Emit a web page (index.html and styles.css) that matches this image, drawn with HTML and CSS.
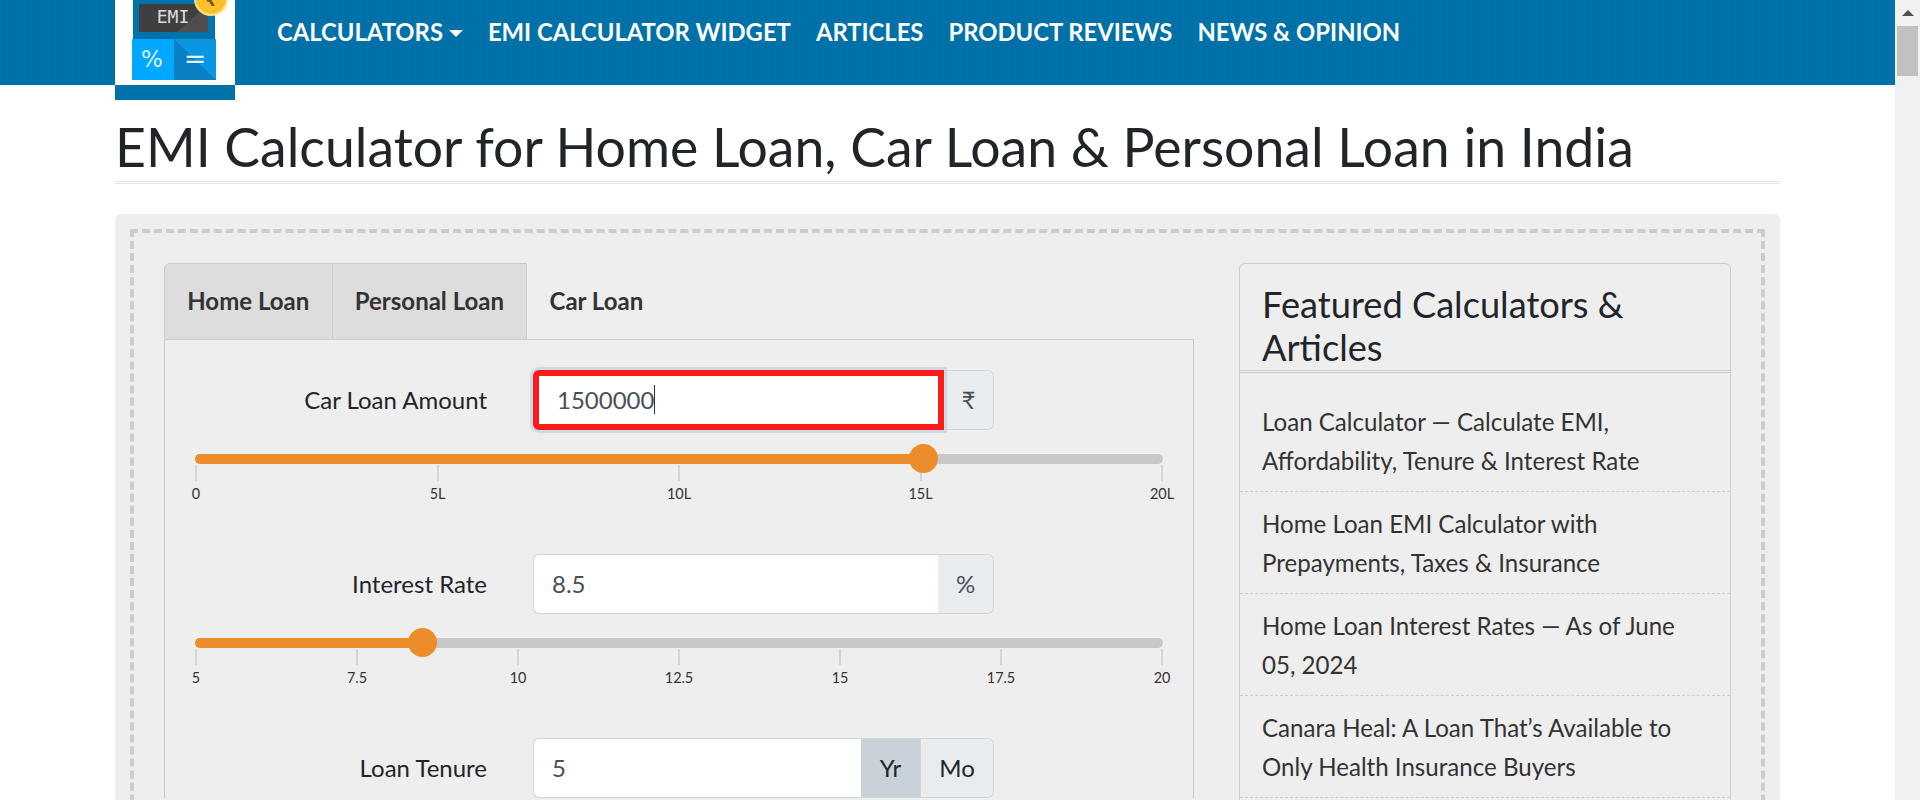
FILE: index.html
```html
<!DOCTYPE html>
<html lang="en">
<head>
<meta charset="UTF-8" />
<title>EMI Calculator for Home Loan, Car Loan &amp; Personal Loan in India</title>
<link rel="stylesheet" href="styles.css">
</head>
<body>

<div class="page">
  <header class="topbar">
    <a class="logo" href="#">
      <svg class="logo-art" width="120" height="85" viewBox="0 0 120 85">
        <rect x="18" y="0" width="82" height="40" fill="#0272ab" />
        <rect x="24" y="4" width="69" height="28" fill="#3f3f3f" />
        <polygon points="93,4 93,32 62,32" fill="#4e4e4e" />
        <text x="58" y="23" class="logo-emi" text-anchor="middle">EMI</text>
        <circle cx="96" cy="-1" r="16" fill="#fbc02d" stroke="#fde48a" stroke-width="2" />
        <text x="96" y="6" class="logo-coin" text-anchor="middle">₹</text>
        <rect x="17" y="39" width="42" height="41" fill="#00a8ff" />
        <rect x="59" y="39" width="42" height="41" fill="#0a96e0" />
        <polygon points="59,39 101,80 59,80" fill="#0a7fc2" />
        <text x="37" y="67" class="logo-sign" text-anchor="middle">%</text>
        <text x="80" y="68" class="logo-equals" text-anchor="middle">=</text>
      </svg>
    </a>
    <nav class="mainnav">
      <a href="#" class="has-caret">CALCULATORS</a>
      <a href="#">EMI CALCULATOR WIDGET</a>
      <a href="#">ARTICLES</a>
      <a href="#">PRODUCT REVIEWS</a>
      <a href="#">NEWS &amp; OPINION</a>
    </nav>
  </header>

  <main class="container">
    <h1 class="page-title">EMI Calculator for Home Loan, Car Loan &amp; Personal Loan in India</h1>

    <div class="panel">
      <div class="panel-inner">

        <section class="calc">
          <div class="tabs">
            <a href="#" class="tab">Home Loan</a>
            <a href="#" class="tab">Personal Loan</a>
            <a href="#" class="tab tab-active">Car Loan</a>
          </div>
          <div class="tab-body">

            <div class="field">
              <label class="field-label">Car Loan Amount</label>
              <div class="input-group">
                <div class="input input-focus">1500000<span class="caret"></span></div>
                <span class="addon addon-fill">₹</span>
              </div>
            </div>
            <div class="slider">
              <div class="track">
                <div class="track-fill" style="width: 75.2%"></div>
                <div class="thumb" style="left: 75.2%"></div>
              </div>
              <div class="ticks">
                <span class="tick">0</span>
                <span class="tick">5L</span>
                <span class="tick">10L</span>
                <span class="tick">15L</span>
                <span class="tick">20L</span>
              </div>
            </div>

            <div class="field">
              <label class="field-label">Interest Rate</label>
              <div class="input-group">
                <div class="input">8.5</div>
                <span class="addon addon-fill">%</span>
              </div>
            </div>
            <div class="slider">
              <div class="track">
                <div class="track-fill" style="width: 23.4%"></div>
                <div class="thumb" style="left: 23.4%"></div>
              </div>
              <div class="ticks">
                <span class="tick">5</span>
                <span class="tick">7.5</span>
                <span class="tick">10</span>
                <span class="tick">12.5</span>
                <span class="tick">15</span>
                <span class="tick">17.5</span>
                <span class="tick">20</span>
              </div>
            </div>

            <div class="field">
              <label class="field-label">Loan Tenure</label>
              <div class="input-group">
                <div class="input">5</div>
                <span class="addon addon-yr">Yr</span>
                <span class="addon addon-mo">Mo</span>
              </div>
            </div>

          </div>
        </section>

        <aside class="featured">
          <h2 class="featured-title">Featured Calculators &amp; Articles</h2>
          <ul class="featured-list">
            <li><a href="#">Loan Calculator — Calculate EMI, Affordability, Tenure &amp; Interest Rate</a></li>
            <li><a href="#">Home Loan EMI Calculator with Prepayments, Taxes &amp; Insurance</a></li>
            <li><a href="#">Home Loan Interest Rates — As of June 05, 2024</a></li>
            <li><a href="#">Canara Heal: A Loan That’s Available to Only Health Insurance Buyers</a></li>
          </ul>
        </aside>

      </div>
    </div>
  </main>
</div>

<div class="scrollbar">
  <span class="scroll-arrow"></span>
  <span class="scroll-thumb"></span>
</div>

</body>
</html>
```

FILE: styles.css
```css
* {
  box-sizing: border-box;
}
html, body {
  height: 800px;
  overflow: hidden;
}
body {
  margin: 0;
  display: flex;
  font-family: Lato, "Open Sans", sans-serif;
  color: #212529;
  background: #fff;
}
a {
  color: inherit;
  text-decoration: none;
}
.page {
  width: 1895px;
  height: 800px;
  overflow: hidden;
  flex: none;
}

/* top bar */
.topbar {
  height: 85px;
  padding-left: 115px;
  display: flex;
  background: repeating-linear-gradient(90deg, #0072a9 0 3px, #0070a6 3px 6px);
}
.logo {
  display: block;
  width: 120px;
  height: 100px;
  flex: none;
  background: #0072a9;
}
.logo-art {
  display: block;
  background: #fff;
}
.logo-emi {
  font: 18px "DejaVu Sans Mono", monospace;
  fill: #ddd;
}
.logo-coin {
  font: bold 16px "DejaVu Sans", sans-serif;
  fill: #7a5a10;
}
.logo-sign {
  font: 23px "DejaVu Sans", sans-serif;
  fill: #dff3ff;
}
.logo-equals {
  font: 27px "DejaVu Sans", sans-serif;
  fill: #dff3ff;
}
.mainnav {
  display: flex;
  gap: 25px;
  margin-left: 42px;
  height: 63px;
  align-items: center;
  font-size: 23.8px;
  font-weight: 700;
  color: #fff;
  white-space: nowrap;
}
.has-caret::after {
  content: "";
  display: inline-block;
  margin-left: 6px;
  vertical-align: 4px;
  border-top: 7px solid #fff;
  border-left: 7px solid transparent;
  border-right: 7px solid transparent;
}

/* heading */
.container {
  width: 1665px;
  margin-left: 115px;
}
.page-title {
  margin: 0;
  height: 99px;
  padding-top: 30px;
  border-bottom: 3px double #e4e4e4;
  font-size: 53.55px;
  font-weight: 400;
  line-height: 62px;
  white-space: nowrap;
}

/* grey panel */
.panel {
  margin-top: 30px;
  padding: 15px;
  background: #eee;
  border-radius: 6px;
  height: 700px;
}
.panel-inner {
  display: flex;
  height: 100%;
  padding: 30px 30px 0;
  border: 4px dashed #ccc;
  border-bottom: 0;
}

/* tabs */
.calc {
  width: 1030px;
  flex: none;
}
.tabs {
  display: flex;
  height: 77px;
}
.tab {
  padding: 0 22.25px 2px;
  display: flex;
  align-items: center;
  font-size: 24px;
  font-weight: 700;
  color: #333;
  background: #ddd;
  border: 1px solid #ccc;
  border-left-width: 0;
}
.tab:first-child {
  border-left-width: 1px;
  border-top-left-radius: 6px;
}
.tab-active {
  background: none;
  border: 0;
}
.tab-body {
  padding: 30px 0 0 30px;
  border: 1px solid #ccc;
  border-width: 1px 1px 0;
  margin-top: -1px;
}

/* form rows */
.field {
  display: flex;
  align-items: center;
  height: 60px;
}
.field-label {
  width: 292px;
  padding-bottom: 2px;
  text-align: right;
  font-size: 24px;
  margin-right: 46px;
  flex: none;
}
.input-group {
  width: 461px;
  height: 60px;
  display: flex;
  font-size: 24px;
  color: #495057;
}
.input {
  flex: 1;
  display: flex;
  align-items: center;
  padding: 0 0 2px 18px;
  background: #fff;
  border: 1px solid #ced4da;
  border-right: 0;
  border-radius: 6px 0 0 6px;
}
.input-focus {
  flex: none;
  width: 411px;
  padding-left: 18px;
  border: 6px solid #ff1a1a;
  border-radius: 6px 0 0 6px;
  box-shadow: 0 0 0 3px #c9dbe6;
  position: relative;
}
.caret {
  width: 1px;
  height: 29px;
  background: #333;
}
.addon {
  width: 56px;
  flex: none;
  display: flex;
  align-items: center;
  justify-content: center;
  padding-bottom: 2px;
  background: #e9ecef;
  border: 1px solid #ced4da;
  border-left-width: 0;
}
.addon:last-child {
  border-radius: 0 6px 6px 0;
}
.input-focus + .addon {
  width: 50px;
}
.addon-yr {
  width: 60px;
  color: #212529;
  background: #c9d1d9;
}
.addon-mo {
  width: 73px;
  color: #212529;
}

/* sliders */
.slider {
  width: 968px;
  margin: 24px 0 0;
  height: 100px;
  padding-top: 0;
}
.track {
  position: relative;
  height: 10px;
  background: #c8c8c8;
  border-radius: 5px;
}
.track-fill {
  height: 100%;
  background: #ed8c2b;
  border-radius: 5px 0 0 5px;
}
.thumb {
  position: absolute;
  top: -10px;
  width: 29px;
  height: 29px;
  margin-left: -14px;
  border-radius: 50%;
  background: #ed8c2b;
}
.ticks {
  display: flex;
  justify-content: space-between;
  margin: 1px 1px 0;
}
.tick {
  width: 0;
  display: flex;
  flex-direction: column;
  align-items: center;
  font-size: 14.4px;
  line-height: 17px;
  color: #333;
}
.tick::before {
  content: "";
  width: 2px;
  height: 16px;
  margin-bottom: 4px;
  flex: none;
  background: #d2d5d9;
}

/* featured card */
.featured {
  width: 492px;
  margin-left: 45px;
  flex: none;
  align-self: flex-start;
  border: 1px solid #ccc;
  border-radius: 6px;
}
.featured-title {
  margin: 0;
  height: 109px;
  padding: 19px 22px 0;
  border-bottom: 3px double #ccc;
  font-size: 36.2px;
  font-weight: 400;
  line-height: 43px;
  overflow: hidden;
}
.featured-list {
  list-style: none;
  margin: 0;
  padding: 17px 0 40px;
  font-size: 24.1px;
  line-height: 39px;
  color: #333;
}
.featured-list li {
  padding: 12px 22px 11px;
  border-bottom: 1px dashed #ccc;
}

/* window scrollbar */
.scrollbar {
  width: 25px;
  flex: none;
  display: flex;
  flex-direction: column;
  align-items: center;
  background: #f1f1f1;
}
.scroll-arrow {
  margin-top: 10px;
  border-bottom: 6px solid #505050;
  border-left: 6px solid transparent;
  border-right: 6px solid transparent;
}
.scroll-thumb {
  width: 21px;
  height: 50px;
  margin-top: 10px;
  background: #c1c1c1;
}
```
